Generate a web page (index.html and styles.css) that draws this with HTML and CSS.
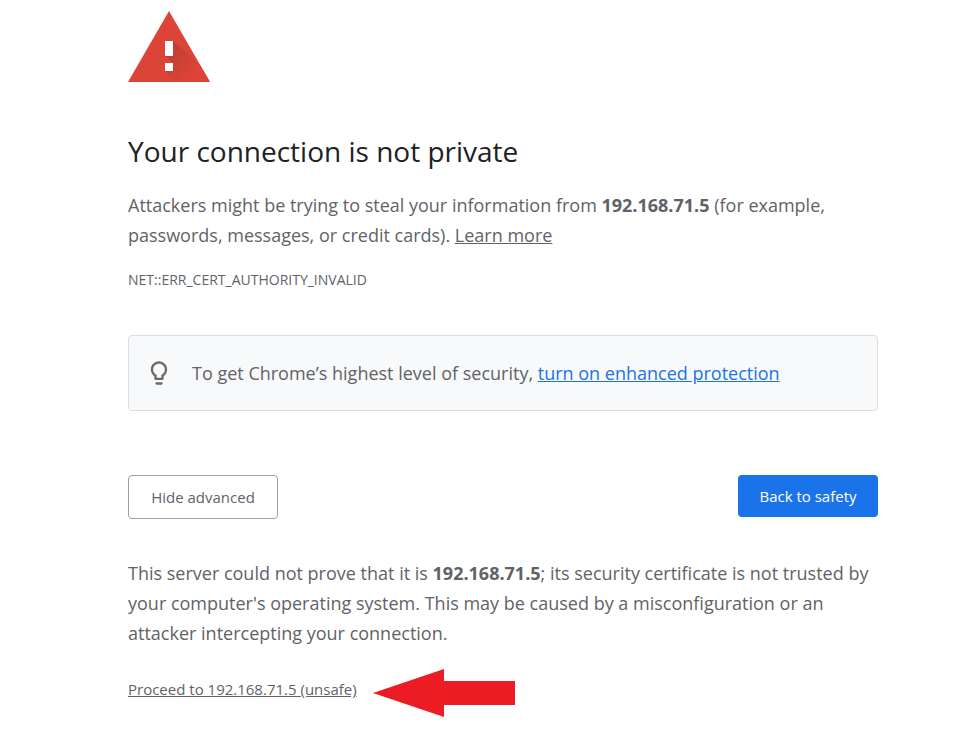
FILE: index.html
```html
<!DOCTYPE html>
<html lang="en">
<head>
    <meta charset="UTF-8">
    <meta name="viewport" content="width=device-width, initial-scale=1.0">
    <title>Privacy error</title>
    <link rel="stylesheet" href="styles.css">
</head>
<body>
    <main class="interstitial">
        <svg class="warning-icon" viewBox="0 0 84 72" aria-hidden="true">
            <defs>
                <linearGradient id="shade" gradientUnits="userSpaceOnUse" x1="40" y1="34" x2="66" y2="60">
                    <stop offset="0" stop-color="#bf3c31"/>
                    <stop offset="1" stop-color="#db4437"/>
                </linearGradient>
            </defs>
            <path d="M41 0L82 71H0z" fill="#db4437"/>
            <path d="M45 30l27 24 10 17H48L37 60l8-8-8-7z" fill="url(#shade)"/>
            <path d="M37 30h8v15h-8zM37 52h8v8h-8z" fill="#fff"/>
        </svg>

        <h1>Your connection is not private</h1>
        <p>Attackers might be trying to steal your information from <strong>192.168.71.5</strong> (for example,<br>passwords, messages, or credit cards). <a href="#">Learn more</a></p>
        <p class="error-code">NET::ERR_CERT_AUTHORITY_INVALID</p>

        <div class="protection">
            <svg class="bulb-icon" viewBox="0 0 24 24" aria-hidden="true">
                <path d="M9 21c0 .55.45 1 1 1h4c.55 0 1-.45 1-1v-1H9v1zm3-19C8.140 2 5 5.140 5 9c0 2.380 1.190 4.470 3 5.740V17c0 .55.45 1 1 1h6c.55 0 1-.45 1-1v-2.260c1.810-1.270 3-3.360 3-5.740 0-3.860-3.140-7-7-7zm2.850 11.100l-.85.6V16h-4v-2.300l-.85-.6C7.800 12.160 7 10.630 7 9c0-2.760 2.240-5 5-5s5 2.240 5 5c0 1.630-.8 3.160-2.150 4.100z" fill="#6b6b6b"/>
            </svg>
            <p>To get Chrome’s highest level of security, <a href="#">turn on enhanced protection</a></p>
        </div>

        <div class="buttons">
            <button type="button" class="secondary">Hide advanced</button>
            <button type="button" class="primary">Back to safety</button>
        </div>

        <p class="details">This server could not prove that it is <strong>192.168.71.5</strong>; its security certificate is not trusted by<br>your computer's operating system. This may be caused by a misconfiguration or an<br>attacker intercepting your connection.</p>

        <div class="proceed">
            <a href="#">Proceed to 192.168.71.5 (unsafe)</a>
            <svg class="arrow" viewBox="0 0 142 48" aria-hidden="true">
                <path d="M0 24L71 0v12h71v24H71v12z" fill="#ed1c24"/>
            </svg>
        </div>
    </main>
</body>
</html>
```

FILE: styles.css
```css
/* General Styles */
body {
    margin: 0;
    background: #fff;
    color: #5f6368;
    font-family: "Open Sans", "Noto Sans", sans-serif;
    font-size: 18px;
    line-height: 30px;
}

.interstitial {
    max-width: 750px;
    margin: 0 102px 0 128px;
    padding-top: 11px;
}

.warning-icon {
    display: block;
    width: 84px;
    height: 72px;
}

h1 {
    margin: 49px 0 20px;
    color: #202124;
    font-size: 28px;
    font-weight: 400;
    line-height: 38px;
}

p {
    margin: 0;
}

a {
    color: inherit;
}

.error-code {
    margin-top: 20px;
    font-size: 14px;
    line-height: 20px;
}

/* Enhanced protection box */
.protection {
    display: flex;
    align-items: center;
    gap: 19px;
    margin-top: 45px;
    padding: 22px 16px;
    border: 1px solid #dadce0;
    border-radius: 4px;
    background: #f8f9fa;
}

.bulb-icon {
    width: 28px;
    height: 28px;
}

.protection a {
    color: #1a73e8;
}

/* Buttons */
.buttons {
    display: flex;
    justify-content: space-between;
    align-items: flex-start;
    margin-top: 64px;
}

button {
    min-width: 140px;
    height: 42px;
    padding: 0 16px;
    border: none;
    border-radius: 4px;
    font-family: inherit;
    font-size: 15px;
    cursor: pointer;
}

.primary {
    background: #1a73e8;
    color: #fff;
}

.secondary {
    min-width: 150px;
    height: 44px;
    border: 1px solid #9aa0a6;
    background: #fff;
    color: #5f6368;
}

.details {
    margin-top: 39px;
}

.proceed {
    display: flex;
    align-items: flex-start;
    gap: 16px;
    margin-top: 21px;
    font-size: 15px;
}

.proceed a {
    margin-top: 5px;
}

.arrow {
    width: 142px;
    height: 48px;
}
```
